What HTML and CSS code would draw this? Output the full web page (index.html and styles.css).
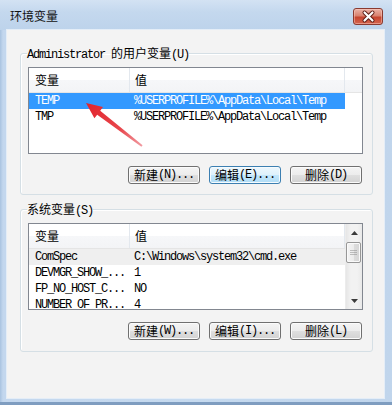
FILE: index.html
```html
<!DOCTYPE html>
<html lang="zh-CN">
<head>
<meta charset="utf-8">
<title>环境变量</title>
<link rel="stylesheet" href="styles.css">
</head>
<body>
<div class="window">
  <div class="titlebar">
    <span class="title zh">环境变量</span>
    <button class="close" aria-label="关闭">
      <svg width="27" height="15" viewBox="0 0 27 15">
        <path d="M9.5 3.5 L17.5 11.5 M17.5 3.5 L9.5 11.5" stroke="#5b1c14" stroke-width="4" stroke-linecap="round"/>
        <path d="M9.5 3.5 L17.5 11.5 M17.5 3.5 L9.5 11.5" stroke="#ffffff" stroke-width="2.2" stroke-linecap="round"/>
      </svg>
    </button>
  </div>
  <div class="client">
    <fieldset class="group g1">
      <legend>Administrator <span class="zh">的用户变量</span>(U)</legend>
      <div class="list">
        <div class="list-main">
          <div class="header">
            <div class="hc c1"><span class="zh">变量</span></div>
            <div class="hc c2"><span class="zh">值</span></div>
            <div class="hc fill"></div>
          </div>
          <div class="row sel"><div class="c1">TEMP</div><div class="c2">%USERPROFILE%\AppData\Local\Temp</div></div>
          <div class="row"><div class="c1">TMP</div><div class="c2">%USERPROFILE%\AppData\Local\Temp</div></div>
        </div>
      </div>
      <div class="buttons">
        <button class="btn"><span class="zh">新建</span>(N)...</button>
        <button class="btn hot"><span class="zh">编辑</span>(E)...</button>
        <button class="btn"><span class="zh">删除</span>(D)</button>
      </div>
    </fieldset>
    <fieldset class="group g2">
      <legend><span class="zh">系统变量</span>(S)</legend>
      <div class="list">
        <div class="list-main">
          <div class="header">
            <div class="hc c1"><span class="zh">变量</span></div>
            <div class="hc c2"><span class="zh">值</span></div>
            <div class="hc fill"></div>
          </div>
          <div class="row hover"><div class="c1">ComSpec</div><div class="c2">C:\Windows\system32\cmd.exe</div></div>
          <div class="row"><div class="c1">DEVMGR_SHOW_...</div><div class="c2">1</div></div>
          <div class="row"><div class="c1">FP_NO_HOST_C...</div><div class="c2">NO</div></div>
          <div class="row"><div class="c1">NUMBER_OF_PR...</div><div class="c2">4</div></div>
        </div>
        <div class="scrollbar">
          <div class="sb-btn">
            <svg width="7" height="4" viewBox="0 0 7 4"><path d="M0 4 L3.5 0 L7 4 Z" fill="#3b3b3b"/></svg>
          </div>
          <div class="sb-track">
            <div class="thumb"><span class="grip"></span></div>
          </div>
          <div class="sb-btn">
            <svg width="7" height="4" viewBox="0 0 7 4"><path d="M0 0 L3.5 4 L7 0 Z" fill="#3b3b3b"/></svg>
          </div>
        </div>
      </div>
      <div class="buttons">
        <button class="btn"><span class="zh">新建</span>(W)...</button>
        <button class="btn"><span class="zh">编辑</span>(I)...</button>
        <button class="btn"><span class="zh">删除</span>(L)</button>
      </div>
    </fieldset>
  </div>
  <svg class="arrow" width="392" height="405" viewBox="0 0 392 405">
    <defs>
      <linearGradient id="ag" x1="86" y1="103" x2="143" y2="147" gradientUnits="userSpaceOnUse">
        <stop offset="0" stop-color="#e2232b"/>
        <stop offset="0.6" stop-color="#e8474d"/>
        <stop offset="1" stop-color="#f2a0a6"/>
      </linearGradient>
    </defs>
    <polygon points="86,103 103,107.1 100.2,110.7 142.6,145.2 141.4,146.8 97.2,114.7 94.4,118.3" fill="url(#ag)"/>
  </svg>
</div>
</body>
</html>
```

FILE: styles.css
```css
html, body {
  margin: 0;
  padding: 0;
  background: #bfd4ec;
}

.window {
  position: relative;
  width: 392px;
  height: 405px;
  box-sizing: border-box;
  background: linear-gradient(to right, #a9c3e0 0px, #c3d7ee 3px, #c6daef 50%, #c0d5ec 100%);
  border-bottom: 3px solid #7f9dc0;
  display: flex;
  flex-direction: column;
  overflow: hidden;
  font-family: "Liberation Mono", monospace;
  font-size: 12px;
  letter-spacing: -1.2px;
  color: #000;
}

.zh {
  font-family: "Noto Sans CJK SC", sans-serif;
  letter-spacing: 0;
  font-size: 12px;
}

.titlebar {
  height: 30px;
  flex: none;
  display: flex;
  align-items: center;
  padding-left: 10px;
  background: linear-gradient(to bottom, #d3e2f3 0%, #c4d8ee 40%, #bdd3eb 100%);
}

.title {
  margin-top: 2px;
  line-height: 14px;
  color: #111;
}

.close {
  margin-left: auto;
  margin-right: 9px;
  margin-top: 3px;
  width: 30px;
  height: 17px;
  padding: 0;
  box-sizing: border-box;
  border: 1px solid #8a3a30;
  border-radius: 3px;
  background: linear-gradient(to bottom, #eab2a6 0%, #d9826f 45%, #c6452f 55%, #d5654f 100%);
  box-shadow: inset 0 0 0 1px rgba(255, 210, 200, 0.45);
  display: flex;
  align-items: center;
  justify-content: center;
}

.client {
  flex: none;
  width: 377px;
  height: 368px;
  margin-left: 7px;
  box-sizing: border-box;
  background: #f3f3f3;
  box-shadow: 0 0 0 1px #e4edf7;
  padding: 0 11px 0 13px;
  display: flex;
  flex-direction: column;
}

.group {
  margin: 0;
  min-width: 0;
  border: 1px solid #d5dfe5;
  border-radius: 3px;
  box-shadow: inset 1px 1px 0 #fff;
  padding: 7px 9px 10px 7px;
}

.g1 { margin-top: 16px; }
.g2 { margin-top: 7px; padding-bottom: 11px; }

.group legend {
  padding: 0;
  margin-left: -1px;
  line-height: 14px;
  height: 14px;
}

.list {
  height: 87px;
  box-sizing: border-box;
  border: 1px solid #828790;
  background: #fff;
  display: flex;
  overflow: hidden;
}

.list-main {
  flex: 1;
  min-width: 0;
  display: flex;
  flex-direction: column;
}

.header {
  height: 25px;
  flex: none;
  box-sizing: border-box;
  display: flex;
  border-bottom: 1px solid #e5e5e5;
  background: linear-gradient(to bottom, #ffffff 0%, #ffffff 50%, #f6f7f9 51%, #f3f4f6 100%);
}

.hc {
  box-sizing: border-box;
  height: 24px;
  line-height: 24px;
  border-right: 1px solid #e3e8ee;
}

.hc.c1 { width: 101px; padding-left: 6px; }
.hc.c2 { width: 215px; padding-left: 5px; }
.hc.fill { flex: 1; border-right: 0; }

.row {
  width: 316px;
  height: 16px;
  line-height: 16px;
  flex: none;
  display: flex;
  white-space: nowrap;
}

.row .c1 {
  width: 101px;
  flex: none;
  padding-left: 6px;
  box-sizing: border-box;
  overflow: hidden;
}

.row .c2 {
  flex: 1;
  padding-left: 4px;
  overflow: hidden;
}

.row.sel {
  background: #3399ff;
  color: #fff;
}

.row.hover {
  background: #efefef;
}

.scrollbar {
  width: 17px;
  flex: none;
  display: flex;
  flex-direction: column;
  background: linear-gradient(to right, #e6e6e6 0%, #f2f2f2 30%, #f2f2f2 70%, #e9e9e9 100%);
  border-left: 1px solid #ececec;
  box-sizing: border-box;
}

.sb-btn {
  height: 17px;
  flex: none;
  display: flex;
  align-items: center;
  justify-content: center;
}

.sb-track {
  flex: 1;
  padding-top: 1px;
}

.thumb {
  margin-left: 0px;
  width: 15px;
  height: 21px;
  box-sizing: border-box;
  border: 1px solid #979797;
  border-radius: 2px;
  background: linear-gradient(to right, #f4f4f4 0%, #ececec 50%, #dcdcdc 51%, #d6d6d6 100%);
  box-shadow: inset 0 0 0 1px #fafafa;
  display: flex;
  align-items: center;
  justify-content: center;
}

.grip {
  display: block;
  width: 7px;
  height: 5px;
  background: repeating-linear-gradient(to bottom, #8a8a8a 0, #8a8a8a 1px, transparent 1px, transparent 2px);
  opacity: 0.5;
}

.buttons {
  margin-top: 12px;
  margin-right: 1px;
  display: flex;
  justify-content: flex-end;
  gap: 9px;
}

.btn {
  width: 72px;
  height: 18px;
  padding: 0;
  box-sizing: border-box;
  border: 1px solid #707070;
  border-radius: 3px;
  background: linear-gradient(to bottom, #f4f4f4 0%, #ececec 50%, #dfdfdf 51%, #d2d2d2 100%);
  box-shadow: inset 0 0 0 1px #fbfbfb;
  font-family: "Liberation Mono", monospace;
  font-size: 12px;
  letter-spacing: -1.2px;
  line-height: 16px;
  color: #000;
  white-space: nowrap;
  display: flex;
  align-items: center;
  justify-content: center;
}

.btn.hot {
  border-color: #3c7fb1;
  background: linear-gradient(to bottom, #edf7fd 0%, #ddf1fc 50%, #c3e7fc 51%, #b0dcf5 100%);
  box-shadow: inset 0 0 0 1px #f5fbfe;
}

.arrow {
  position: absolute;
  left: 0;
  top: 0;
  pointer-events: none;
}
```
